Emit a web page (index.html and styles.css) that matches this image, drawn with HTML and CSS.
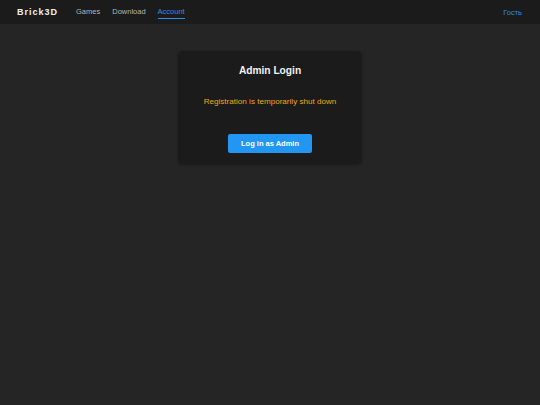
FILE: index.html
```html
<!DOCTYPE html>
<html>
<head>
<meta charset="utf-8">
<link rel="stylesheet" href="styles.css">
</head>
<body>
<header class="topbar">
  <div class="left">
    <div class="logo">Brick3D</div>
    <nav class="nav">
      <a class="link">Games</a>
      <a class="link">Download</a>
      <a class="link active">Account</a>
    </nav>
  </div>
  <a class="guest">Гость</a>
</header>
<main class="main">
  <section class="card">
    <h1 class="title">Admin Login</h1>
    <p class="notice">Registration is temporarily shut down</p>
    <button class="btn">Log in as Admin</button>
  </section>
</main>
</body>
</html>
```
FILE: styles.css
```css
html, body {
  margin: 0;
  padding: 0;
  height: 100%;
}
body {
  background: #252525;
  font-family: "Liberation Sans", Arial, sans-serif;
  color: #e6e6e6;
}
.topbar {
  height: 24px;
  background: #1b1b1b;
  display: flex;
  align-items: center;
  justify-content: space-between;
  padding: 0 18px 0 17px;
}
.left {
  display: flex;
  align-items: center;
}
.logo {
  font-weight: bold;
  font-size: 9px;
  letter-spacing: 1px;
  color: #f0f0f0;
  margin-right: 18px;
}
.nav {
  display: flex;
  gap: 12px;
  height: 24px;
  align-items: center;
}
.link {
  font-size: 7.5px;
  color: #b4b4b4;
  height: 24px;
  line-height: 24px;
  position: relative;
}
.link.active {
  color: #2f8ee0;
}
.link.active::after {
  content: "";
  position: absolute;
  left: 0;
  right: 0;
  top: 18px;
  height: 1px;
  background: #2f8ee0;
}
.guest {
  font-size: 7.5px;
  color: #2f8ee0;
}
.main {
  display: flex;
  justify-content: center;
  padding-top: 27px;
}
.card {
  width: 184px;
  height: 113px;
  box-sizing: border-box;
  background: #1b1b1b;
  border-radius: 5px;
  display: flex;
  flex-direction: column;
  align-items: center;
  padding-top: 13px;
  box-shadow: 0 1px 3px rgba(0,0,0,0.3);
}
.title {
  margin: 0;
  font-size: 10.2px;
  font-weight: bold;
  color: #f2f2f2;
  line-height: 13px;
}
.notice {
  margin: 20px 0 0;
  font-size: 8.1px;
  line-height: 10px;
  color: #eaaa12;
}
.btn {
  margin-top: 27px;
  width: 84px;
  height: 19px;
  border: none;
  border-radius: 2px;
  background: #2196f3;
  color: #fff;
  font-family: "Liberation Sans", Arial, sans-serif;
  font-weight: bold;
  font-size: 7.5px;
  padding: 0;
}
```
